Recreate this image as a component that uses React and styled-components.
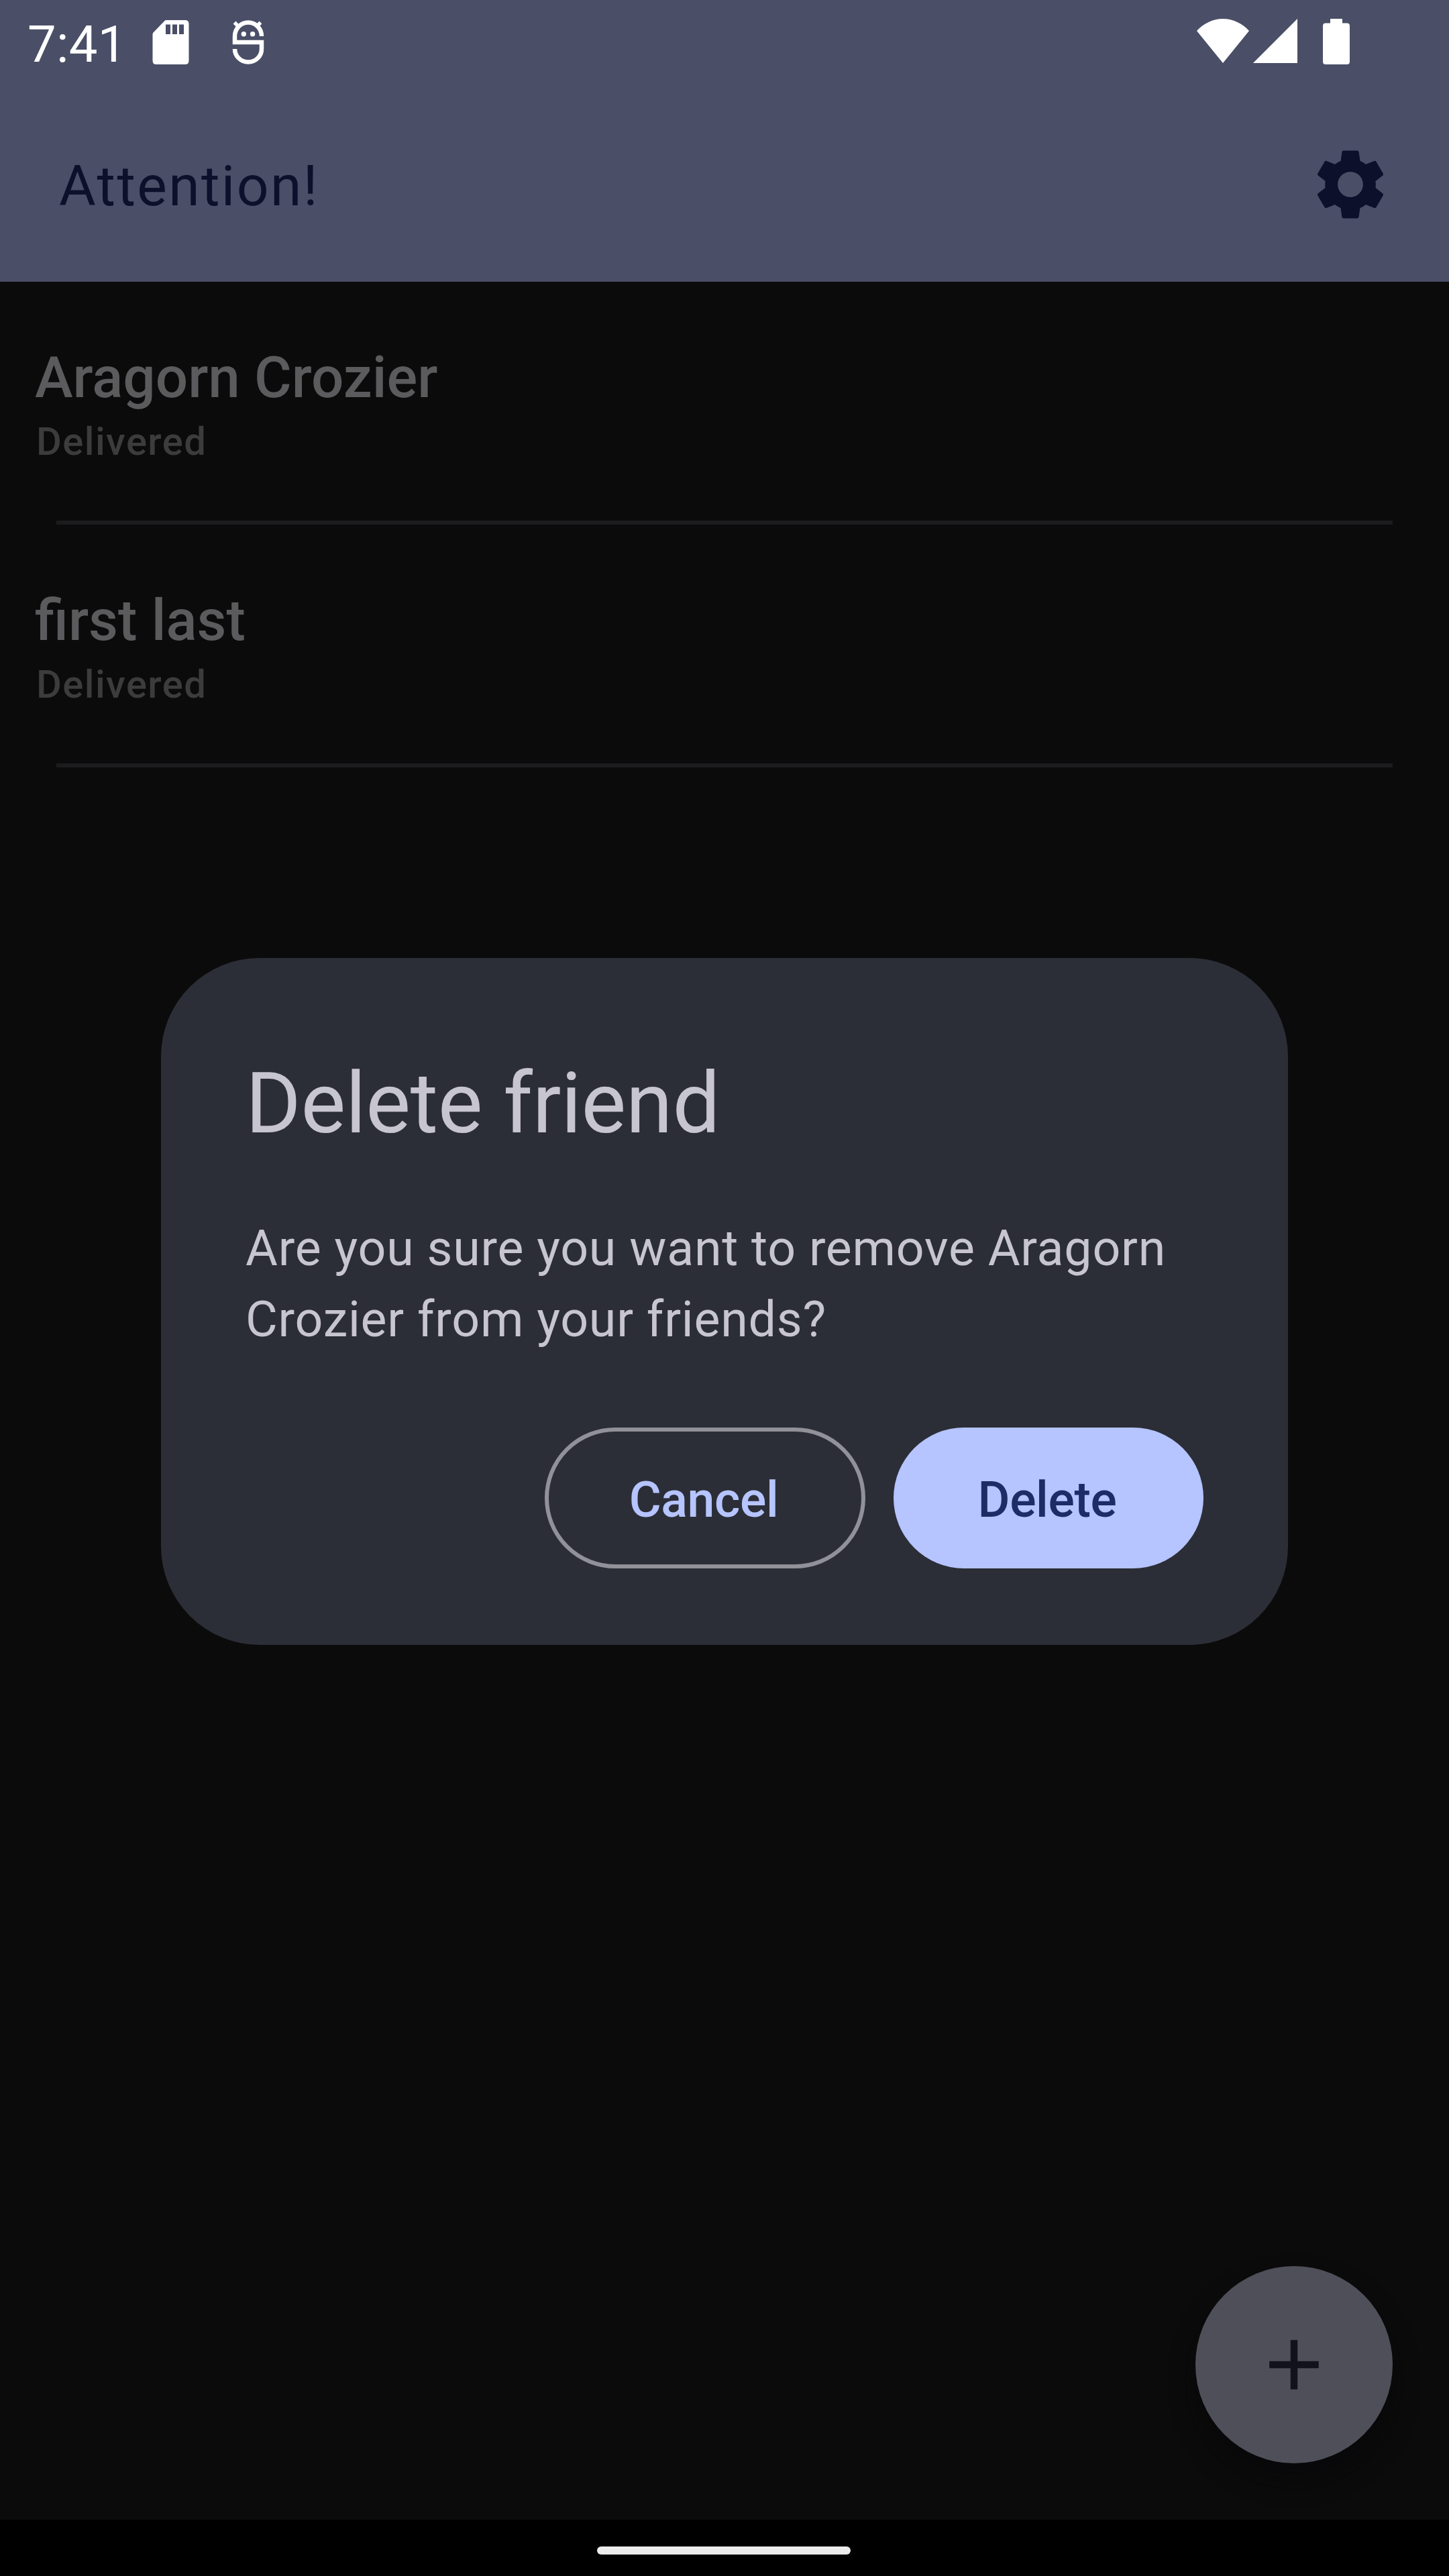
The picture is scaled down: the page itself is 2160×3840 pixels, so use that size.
import React from "react";
import styled, { createGlobalStyle } from "styled-components";
import { MdSettings, MdAdd } from "react-icons/md";

const GlobalStyle = createGlobalStyle`
  body {
    margin: 0;
    background: #0b0b0b;
    font-family: Roboto, "Noto Sans", sans-serif;
  }
  button {
    font-family: inherit;
    padding: 0;
    margin: 0;
  }
`;

const Screen = styled.div`
  position: relative;
  display: flex;
  flex-direction: column;
  width: 2160px;
  height: 3840px;
  overflow: hidden;
  background: #0b0b0b;
`;

const StatusBar = styled.div`
  display: flex;
  align-items: flex-start;
  box-sizing: border-box;
  height: 126px;
  padding: 28px 148px 0 41px;
  background: #4a4e66;
  color: #ffffff;
`;

const Clock = styled.span`
  width: 186px;
  font-size: 76px;
  line-height: 77px;
  letter-spacing: 0.3px;
`;

const StatusIcon = styled.svg`
  display: block;
  flex: none;
  margin-top: ${(p) => p.$top || 0}px;
  margin-left: ${(p) => p.$gap || 0}px;
`;

const Indicators = styled.div`
  display: flex;
  margin-left: auto;
`;

const AppBar = styled.header`
  display: flex;
  align-items: center;
  justify-content: space-between;
  box-sizing: border-box;
  height: 294px;
  padding: 4px 84px 0 88px;
  background: #4a4e66;
  color: #0c102b;
`;

const AppTitle = styled.h1`
  margin: 0;
  padding-top: 5px;
  font-size: 84px;
  font-weight: 400;
  line-height: 100px;
  letter-spacing: 2.4px;
`;

const IconButton = styled.button`
  display: flex;
  border: 0;
  background: none;
  color: inherit;
  font-size: 126px;
`;

const FriendList = styled.main`
  display: flex;
  flex: 1;
  flex-direction: column;
`;

const FriendRow = styled.section`
  display: flex;
  flex-direction: column;
  gap: 3px;
  box-sizing: border-box;
  height: 362px;
  padding: 93px 84px 0 52px;
`;

const FriendName = styled.span`
  color: #5b5b5d;
  font-size: 85.4px;
  font-weight: 500;
  line-height: 100px;
`;

const FriendStatus = styled.span`
  color: #3c3c3d;
  font-size: 58px;
  font-weight: 500;
  line-height: 84px;
  padding-left: 2px;
  letter-spacing: 1.4px;
`;

const Divider = styled.hr`
  width: 1992px;
  height: 6px;
  margin: auto 0 0 32px;
  border: 0;
  background: #1c1c1e;
`;

const Fab = styled.button`
  position: absolute;
  right: 84px;
  bottom: 168px;
  display: flex;
  align-items: center;
  justify-content: center;
  width: 294px;
  height: 294px;
  border: 0;
  border-radius: 50%;
  background: #4f4f59;
  color: #12121c;
  font-size: 126px;
  box-shadow: 0 24px 36px rgba(6, 6, 10, 0.6);
`;

const NavBar = styled.footer`
  display: flex;
  justify-content: center;
  box-sizing: border-box;
  height: 84px;
  padding: 40px 2px 0 0;
  background: #000000;
`;

const NavHandle = styled.div`
  width: 378px;
  height: 12px;
  border-radius: 6px;
  background: #ebebeb;
`;

const Overlay = styled.div`
  position: absolute;
  inset: 124px 0 84px;
  display: flex;
  align-items: center;
  justify-content: center;
`;

const Dialog = styled.div`
  display: flex;
  flex-direction: column;
  box-sizing: border-box;
  width: 1680px;
  height: 1024px;
  padding: 133px 126px 114px;
  border-radius: 147px;
  background: #2c2e37;
  color: #c7c5d0;
`;

const DialogTitle = styled.h2`
  margin: 0 0 79px;
  font-size: 126px;
  font-weight: 400;
  line-height: 168px;
  letter-spacing: -0.28px;
`;

const DialogText = styled.p`
  margin: 0;
  font-size: 73.5px;
  line-height: 106px;
  letter-spacing: 0.77px;
`;

const Actions = styled.div`
  display: flex;
  justify-content: flex-end;
  gap: 42px;
  margin-top: auto;
`;

const Button = styled.button`
  box-sizing: border-box;
  width: ${(p) => (p.$filled ? 462 : 478)}px;
  height: 210px;
  padding: 6px 4px 0 0;
  border: ${(p) => (p.$filled ? "0" : "6px solid #91919a")};
  border-radius: 105px;
  background: ${(p) => (p.$filled ? "#b6c4ff" : "transparent")};
  color: ${(p) => (p.$filled ? "#1e2c66" : "#b6c4ff")};
  font-size: 73.5px;
  font-weight: 500;
  line-height: 100px;
  letter-spacing: -0.4px;
`;

const friends = [
  { name: "Aragorn Crozier", status: "Delivered" },
  { name: "first last", status: "Delivered" },
];

function SdCardIcon() {
  return (
    <StatusIcon $top={2} width="55" height="66" viewBox="0 0 55 66">
      <path
        fill="#fff"
        fillRule="evenodd"
        d="M20 0H49Q54.500 0 54.500 5.500V60.500Q54.500 66 49 66H6Q0.500 66 0.500 60.500V21Q0.500 19.500 2 18L18 1.500Q19 0 20 0ZM20 6.500V21H27V6.500ZM30 6.500V21H37V6.500ZM40 6.500V21H47V6.500Z"
      />
    </StatusIcon>
  );
}

function DebugIcon() {
  return (
    <StatusIcon $top={2} $gap={64} width="48" height="66" viewBox="0 0 48 66">
      <g fill="none" stroke="#fff" strokeWidth="6.500">
        <path d="M44 24A20 20.500 0 0 0 4 24V33H44V43A20 19.500 0 0 1 4 43" />
        <path d="M3.500 3.500L10 10M42.500 3.500L36 10" strokeWidth="5.500" />
      </g>
      <circle cx="17.300" cy="20.700" r="3.700" fill="#fff" />
      <circle cx="30.600" cy="20.700" r="3.700" fill="#fff" />
    </StatusIcon>
  );
}

function WifiIcon() {
  return (
    <StatusIcon width="78" height="66" viewBox="0 0 78 66">
      <path fill="#fff" d="M0 18C10 7 24 0 39 0S68 7 78 18L39 66Z" />
    </StatusIcon>
  );
}

function SignalIcon() {
  return (
    <StatusIcon $gap={6} width="66" height="66" viewBox="0 0 66 66">
      <path fill="#fff" d="M66 0V66H0Z" />
    </StatusIcon>
  );
}

function BatteryIcon() {
  return (
    <StatusIcon $gap={38} width="40" height="68" viewBox="0 0 40 68">
      <path
        fill="#fff"
        d="M11 0H29V6.500H36Q40 6.500 40 10.500V64Q40 68 36 68H4Q0 68 0 64V10.500Q0 6.500 4 6.500H11Z"
      />
    </StatusIcon>
  );
}

export default function App() {
  return (
    <Screen>
      <GlobalStyle />
      <StatusBar>
        <Clock>7:41</Clock>
        <SdCardIcon />
        <DebugIcon />
        <Indicators>
          <WifiIcon />
          <SignalIcon />
          <BatteryIcon />
        </Indicators>
      </StatusBar>
      <AppBar>
        <AppTitle>Attention!</AppTitle>
        <IconButton aria-label="Settings">
          <MdSettings />
        </IconButton>
      </AppBar>
      <FriendList>
        {friends.map((f) => (
          <FriendRow key={f.name}>
            <FriendName>{f.name}</FriendName>
            <FriendStatus>{f.status}</FriendStatus>
            <Divider />
          </FriendRow>
        ))}
      </FriendList>
      <NavBar>
        <NavHandle />
      </NavBar>
      <Fab aria-label="Add friend">
        <MdAdd />
      </Fab>
      <Overlay>
        <Dialog role="dialog">
          <DialogTitle>Delete friend</DialogTitle>
          <DialogText>
            Are you sure you want to remove Aragorn Crozier from your friends?
          </DialogText>
          <Actions>
            <Button>Cancel</Button>
            <Button $filled>Delete</Button>
          </Actions>
        </Dialog>
      </Overlay>
    </Screen>
  );
}
